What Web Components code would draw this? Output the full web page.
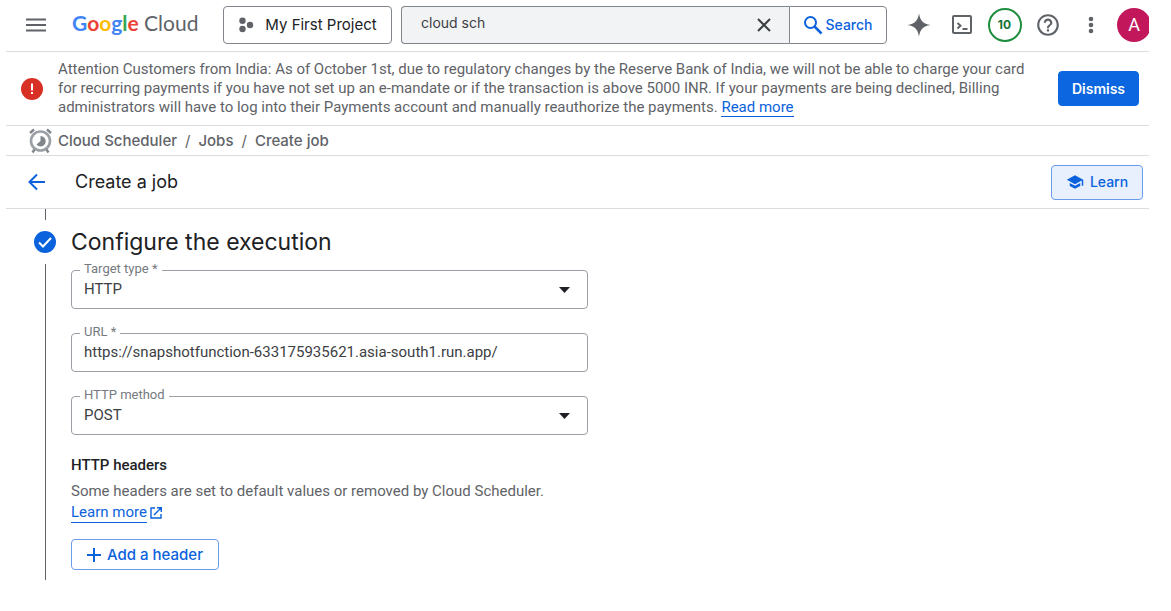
<!DOCTYPE html>
<html lang="en">
<head>
<meta charset="utf-8">
<title>Create job – Cloud Scheduler</title>
<style>
  body { margin: 0; background: #fff; color: #202124; font: 15px/20px Roboto, sans-serif; }
</style>
</head>
<body>
<console-app></console-app>
<script>
const define = (name, html, setup) => {
  const template = document.createElement('template');
  template.innerHTML = `<style>
    *, *::before { box-sizing: border-box; }
    svg { display: block; flex: none; }
    button, input, select { font: inherit; color: inherit; margin: 0; }
    button { cursor: pointer; }
    a { color: #0b62dd; text-decoration: none; }
  </style>` + html;
  customElements.define(name, class extends HTMLElement {
    constructor() {
      super();
      const root = this.attachShadow({ mode: 'open' });
      root.append(template.content.cloneNode(true));
    }
    connectedCallback() { if (setup) setup(this, this.shadowRoot); }
  });
};

define('console-button', `
  <style>
    :host { display: block; flex: none; }
    button { display: flex; align-items: center; justify-content: center; gap: 6px; width: 100%;
      height: var(--height, 35px); padding: 0 13px; border: 1px solid #6a9cec; border-radius: 4px;
      background: #fff; color: #0b62dd; font: 500 var(--size, 14px)/20px Inter, sans-serif; white-space: nowrap; }
    :host([kind=filled]) button { background: #0b66e0; border-color: #0b66e0; color: #fff; font-weight: 600; }
    :host([kind=tonal]) button { background: #e8f0fe; }
    :host([kind=neutral]) button { border-color: #80868b; color: #202124; font-weight: 400; gap: 11px; }
    :host([kind=attached]) button { border-color: #80868b; border-radius: 0 4px 4px 0; gap: 2px; }
  </style>
  <button type="button"><slot name="icon"></slot><slot></slot></button>`);

define('cloud-logo', `
  <style>
    :host { display: block; flex: none; }
    a { display: block; padding-bottom: 3px; font: 400 21px/28px Lato, sans-serif; color: #5f6368; white-space: nowrap; }
    b { font-weight: 700; }
    .b { color: #4285f4; } .r { color: #ea4335; } .y { color: #fbbc04; } .g { color: #34a853; }
  </style>
  <a href="#"><b><span class="b">G</span><span class="r">o</span><span class="y">o</span><span class="b">g</span><span class="g">l</span><span class="r">e</span></b> Cloud</a>`);

define('search-bar', `
  <style>
    :host { display: block; flex: 1; min-width: 0; }
    form { display: flex; }
    .box { display: flex; flex: 1; min-width: 0; align-items: center; height: 38px; padding: 0 15px 0 19px;
      background: #f1f3f4; border: 1px solid #80868b; border-right: 0; border-radius: 4px 0 0 4px; }
    input { flex: 1; min-width: 0; padding: 0 0 4px; border: 0; outline: 0; background: none; color: #3c4043;
      font: 14px/20px Inter, sans-serif; }
    .clear { padding: 0; border: 0; background: none; }
    console-button { width: 98px; --height: 38px; }
  </style>
  <form>
    <div class="box">
      <input type="text" value="cloud sch" aria-label="Search">
      <button class="clear" type="button" aria-label="Clear search">
        <svg width="20" height="20" viewBox="0 0 20 20"><path d="M4 4l12 12M16 4L4 16" fill="none" stroke="#3c4043" stroke-width="2"/></svg>
      </button>
    </div>
    <console-button kind="attached">
      <svg slot="icon" width="20" height="20" viewBox="0 0 20 20"><g fill="none" stroke="#0b62dd" stroke-width="2"><circle cx="7.500" cy="7.500" r="5.500"/><path d="M11.500 11.500l7 7" stroke-width="2.500"/></g></svg>Search</console-button>
  </form>`);

define('top-bar', `
  <style>
    :host { display: block; border-bottom: 1px solid #dadce0; }
    header { display: flex; align-items: center; height: 51px; padding: 0 0 2px 20px; overflow: hidden; }
    .plain { display: grid; place-items: center; padding: 0; border: 0; background: none; }
    cloud-logo { width: 151px; margin-left: 26px; }
    .project { width: 169px; margin-right: 9px; --height: 38px; --size: 15px; }
    nav { display: grid; grid-template-columns: repeat(5, 43px) 37px; align-items: center; margin-left: 10px; overflow: hidden; }
    .count { justify-self: center; width: 34px; height: 34px; border: 2px solid #1e8e3e; border-radius: 50%; color: #137333;
      font: 700 12px/16px Inter, sans-serif; }
    .avatar { width: 34px; height: 34px; margin-left: 5px; border-radius: 50%; background: #c2185b; color: #fff; font: 18px/24px Roboto, sans-serif; }
  </style>
  <header>
    <button class="plain" aria-label="Main menu"><svg width="20" height="14" viewBox="0 0 20 14"><path d="M0 1.500h20M0 7h20M0 12.500h20" stroke="#5f6368" stroke-width="2"/></svg></button>
    <cloud-logo></cloud-logo>
    <console-button class="project" kind="neutral">
      <svg slot="icon" width="16" height="16" viewBox="0 0 16 16" fill="#5f6368"><circle cx="4.500" cy="3.800" r="3.200"/><circle cx="4.500" cy="12" r="3.200"/><circle cx="12" cy="8" r="3.200"/></svg>My First Project</console-button>
    <search-bar></search-bar>
    <nav aria-label="Tools">
      <button class="plain" aria-label="Gemini"><svg width="24" height="24" viewBox="0 0 24 24"><path d="M12 .5C13.300 8 16 10.700 23.500 12 16 13.300 13.300 16 12 23.500 10.700 16 8 13.300.5 12 8 10.700 10.700 8 12 .5z" fill="#5f6368"/></svg></button>
      <button class="plain" aria-label="Cloud Shell"><svg width="20" height="20" viewBox="0 0 20 20" fill="none" stroke="#5f6368" stroke-width="2"><rect x="1" y="1" width="18" height="17" rx="1"/><path d="M5.500 8l3 2.800-3 2.800M10.500 14h5"/></svg></button>
      <button class="plain count" aria-label="Notifications">10</button>
      <button class="plain" aria-label="Help"><svg width="26" height="26" viewBox="0 0 24 24"><path d="M11 18h2v-2h-2v2zm1-16C6.480 2 2 6.480 2 12s4.480 10 10 10 10-4.480 10-10S17.520 2 12 2zm0 18c-4.410 0-8-3.590-8-8s3.590-8 8-8 8 3.590 8 8-3.590 8-8 8zm0-14c-2.210 0-4 1.790-4 4h2c0-1.100.9-2 2-2s2 .9 2 2c0 2-3 1.750-3 5h2c0-2.250 3-2.500 3-5 0-2.210-1.790-4-4-4z" fill="#5f6368"/></svg></button>
      <button class="plain" aria-label="More options"><svg width="24" height="24" viewBox="0 0 24 24" fill="#5f6368"><circle cx="12" cy="6" r="2.300"/><circle cx="12" cy="12" r="2.300"/><circle cx="12" cy="18" r="2.300"/></svg></button>
      <button class="plain avatar" aria-label="Account">A</button>
    </nav>
  </header>`);

define('notice-banner', `
  <style>
    :host { display: flex; align-items: center; gap: 20px; padding: 8px 10px 8px 14px; border-bottom: 1px solid #dadce0; }
    p { flex: 1; margin: 0; color: #5f6368; line-height: 19px; }
    a { display: inline-block; line-height: 18px; border-bottom: 1px solid #0b62dd; }
    .text { display: flex; flex: 1; gap: 14px; align-items: center; }
    console-button { width: 81px; }
  </style>
  <div class="text">
    <svg width="24" height="24" viewBox="0 0 24 24"><circle cx="12" cy="12" r="11" fill="#d93025"/><path d="M11 6.500h2v7h-2zM11 15h2v2h-2z" fill="#fff"/></svg>
    <p><slot></slot> <a href="#">Read more</a></p>
  </div>
  <console-button kind="filled">Dismiss</console-button>`);

define('crumb-trail', `
  <style>
    :host { display: block; border-bottom: 1px solid #dadce0; }
    nav { display: flex; align-items: center; height: 29px; padding-left: 23px; gap: 6px; font: 500 15px/20px Inter, sans-serif; }
    ol { display: flex; margin: 0; padding: 0; list-style: none; }
    li + li::before { content: "/"; padding: 0 8px; font-weight: 400; }
    li, a { color: #5f6368; }
  </style>
  <nav aria-label="Breadcrumb">
    <svg width="23" height="26" viewBox="0 0 23 26"><circle cx="11.500" cy="13" r="9.500" fill="none" stroke="#9aa0a6" stroke-width="2.600"/><path d="M11.500 8a5.200 5.200 0 1 1-4 8.500l4-3.500z" fill="#80868b"/><path d="M1 5l4-3.500M22 5l-4-3.500M5.500 21.500L3.500 24.500M17.500 21.500l2 3" stroke="#80868b" stroke-width="2.400"/></svg>
    <ol><li><a href="#">Cloud Scheduler</a></li><li><a href="#">Jobs</a></li><li aria-current="page">Create job</li></ol>
  </nav>`);

define('page-title', `
  <style>
    :host { display: block; border-bottom: 1px solid #dadce0; }
    div { display: flex; align-items: center; height: 52px; padding: 0 6px 0 19px; }
    h1 { flex: 1; margin: 0 0 0 26px; font: 400 18px/24px Inter, sans-serif; }
    console-button { width: 92px; }
  </style>
  <div>
    <a href="#" aria-label="Back"><svg width="24" height="24" viewBox="0 0 24 24"><path d="M20 12H5M12 4.500L4.500 12l7.500 7.500" fill="none" stroke="#0b62dd" stroke-width="2"/></svg></a>
    <h1><slot></slot></h1>
    <console-button kind="tonal"><svg slot="icon" width="18" height="18" viewBox="0 0 24 24" fill="#0b62dd"><path d="M5 13.180v4L12 21l7-3.820v-4L12 17l-7-3.820zM12 3L1 9l11 6 9-4.910V17h2V9L12 3z"/></svg>Learn</console-button>
  </div>`);

const fieldStyle = `
  <style>
    :host { display: block; position: relative; }
    label { position: absolute; left: 9px; top: -9px; padding: 0 4px; background: #fff; color: #757a7f; font-size: 13px; line-height: 16px; }
    input, select { display: block; width: 100%; height: 39px; padding: 0 13px 2px 12px; border: 1px solid #9aa0a6; border-radius: 4px;
      background: #fff; color: #3c4043; font-size: 15px; line-height: 20px; appearance: none; }
    svg { position: absolute; right: 18px; top: 17px; pointer-events: none; }
  </style>`;
define('text-field', fieldStyle + `<label for="control"></label><input id="control" type="text">`, (host, root) => {
  root.querySelector('label').textContent = host.getAttribute('label');
  root.querySelector('input').value = host.getAttribute('value');
});
define('select-field', fieldStyle + `<label for="control"></label><select id="control"><option></option></select>
  <svg width="11" height="6" viewBox="0 0 11 6"><path d="M0 0h11L5.500 6z" fill="#202124"/></svg>`, (host, root) => {
  root.querySelector('label').textContent = host.getAttribute('label');
  root.querySelector('option').textContent = host.getAttribute('value');
});

define('form-step', `
  <style>
    :host { display: grid; grid-template-columns: 24px minmax(0, 517px); column-gap: 14px; padding-left: 27px; }
    .rail { display: flex; flex-direction: column; align-items: center; gap: 10px; }
    .rail::before { content: ""; height: 11px; width: 1px; background: #5f6368; }
    .rail span { flex: 1; width: 1px; background: #5f6368; }
    section { padding: 17px 0 10px; }
    h2 { margin: 0 0 12px; font: 400 23px/32px Inter, sans-serif; }
  </style>
  <div class="rail"><svg width="24" height="24" viewBox="0 0 24 24"><circle cx="12" cy="12" r="11" fill="#0b62dd"/><path d="M6 12.500l4 4 8-8.500" fill="none" stroke="#fff" stroke-width="2"/></svg><span></span></div>
  <section><h2><slot name="title"></slot></h2><slot></slot></section>`);

define('job-form', `
  <style>
    :host { display: block; }
    form { display: grid; gap: 24px; }
    h3 { margin: 20px 0 5px; font: 500 15px/20px Roboto, sans-serif; }
    p { margin: 0 0 16px; color: #5f6368; line-height: 22px; }
    a { display: flex; align-items: center; gap: 2px; width: max-content; }
    a span { line-height: 20px; border-bottom: 1px solid #0b62dd; }
    console-button { width: 148px; --height: 31px; --size: 15px; }
  </style>
  <form>
    <select-field label="Target type *" value="HTTP"></select-field>
    <text-field label="URL *" value="https://snapshotfunction-633175935621.asia-south1.run.app/"></text-field>
    <select-field label="HTTP method" value="POST"></select-field>
  </form>
  <h3>HTTP headers</h3>
  <p>Some headers are set to default values or removed by Cloud Scheduler.
    <a href="#"><span>Learn more</span><svg width="14" height="14" viewBox="0 0 14 14" fill="none" stroke="#0b62dd" stroke-width="1.400"><path d="M6 2H2v10h10V8M8 1.700h4.300V6M12 2L5 9"/></svg></a></p>
  <console-button><svg slot="icon" width="14" height="14" viewBox="0 0 14 14"><path d="M7 0v14M0 7h14" stroke="#0b62dd" stroke-width="2"/></svg>Add a header</console-button>`);

define('console-app', `
  <style>:host { display: block; padding: 0 22px 0 6px; }</style>
  <top-bar></top-bar>
  <notice-banner>Attention Customers from India: As of October 1st, due to regulatory changes by the Reserve Bank of India, we will not be able to charge your card for recurring payments if you have not set up an e-mandate or if the transaction is above 5000 INR. If your payments are being declined, Billing administrators will have to log into their Payments account and manually reauthorize the payments.</notice-banner>
  <crumb-trail></crumb-trail>
  <main>
    <page-title>Create a job</page-title>
    <form-step><span slot="title">Configure the execution</span><job-form></job-form></form-step>
  </main>`);
</script>
</body>
</html>
